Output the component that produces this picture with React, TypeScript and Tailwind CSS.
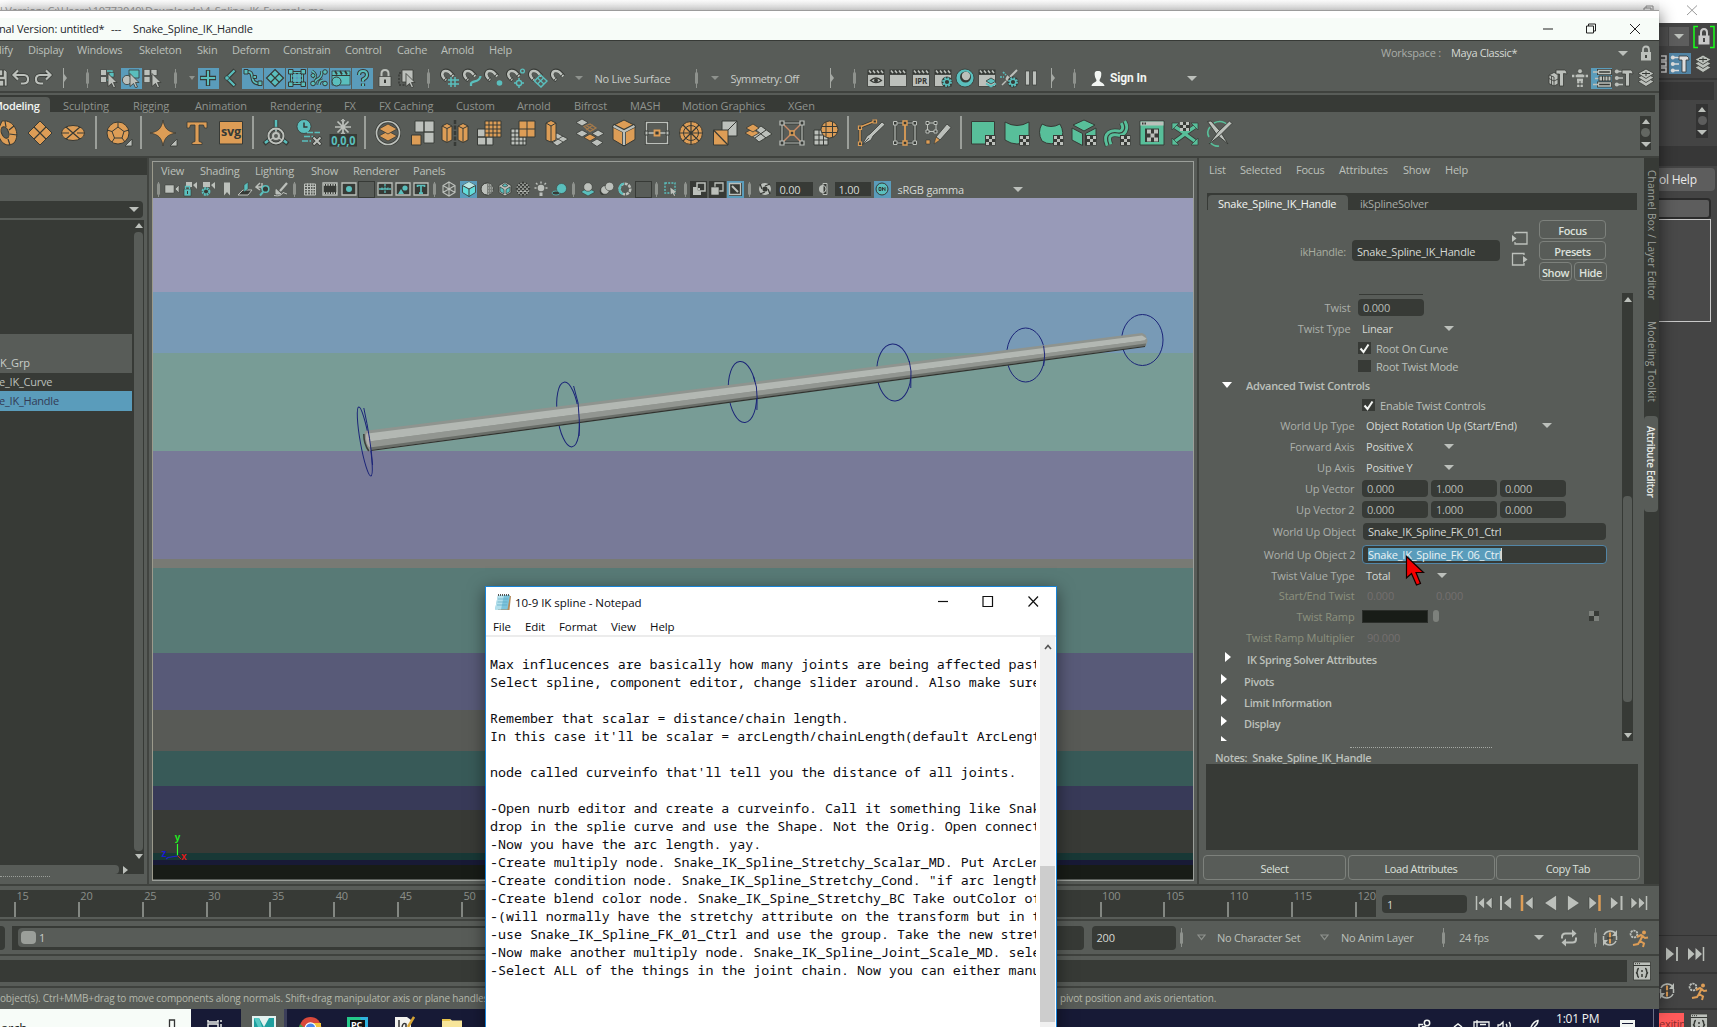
import React from 'react';

type Kids = { children?: React.ReactNode };

const L = '#bcc0bb';
const K = '#373a36';
const T = '#5abfbd';
const O = '#dd9d56';
const G = '#58bf9a';

/* ---------- icon frames ---------- */
const S20 = ({ children }: Kids) => (
  <svg className="h-5 w-5 shrink-0" viewBox="0 0 20 20" fill="none">{children}</svg>
);
const S26 = ({ children }: Kids) => (
  <svg className="h-[26px] w-[26px] shrink-0 overflow-visible" viewBox="0 0 26 26" fill="none">{children}</svg>
);
const S16 = ({ children }: Kids) => (
  <svg className="h-4 w-4 shrink-0" viewBox="0 0 16 16" fill="none">{children}</svg>
);

const Down = () => <span className="h-0 w-0 shrink-0 border-x-[5px] border-t-[5px] border-x-transparent border-t-[#bcc0bb]" />;
const Up = () => <span className="h-0 w-0 shrink-0 border-x-[4.5px] border-b-[5px] border-x-transparent border-b-[#bcc0bb]" />;
const SmallDown = () => <span className="h-0 w-0 shrink-0 border-x-[4px] border-t-[4px] border-x-transparent border-t-[#8e928d]" />;
const Pin = ({ w, h = 'h-[19px]' }: { w: string; h?: string }) => (
  <span className={`flex shrink-0 items-center justify-center ${w}`}>
    <span className={`flex w-[3px] items-center justify-center ${h}`}>
      <span className="absolute h-[12px] w-[3px] rounded-sm bg-[#8e928d]" />
      <span className="h-full w-px bg-[#8e928d]" />
    </span>
  </span>
);
const Fold = () => (
  <span className="flex w-[22px] shrink-0 items-center justify-center">
    <svg className="h-5 w-[6px]" viewBox="0 0 6 20"><path d="M1.5 0V20" stroke="#a5a9a4" /><path d="M2 6 5 10 2 14Z" fill="#a5a9a4" /></svg>
  </span>
);

const cursor = <path d="M9 5.500 18 14.500H14.500L16.500 19 14.500 19.800 12.500 15.500 9 18.500Z" fill={L} stroke={K} strokeWidth=".8" />;
const magnet = (
  <>
    <path d="M6.500 12.500C-1 7 2 1.500 7.500 2.800 10 3.500 11 5.500 13.500 8" stroke={K} strokeWidth="4" />
    <path d="M6.200 12C-.5 7 2.500 2 7.500 3.300 10 4 10.500 5.500 13.300 8.200" stroke={L} strokeWidth="2.600" />
    <path d="M4 12 6.800 9.500M10.500 8.500 13 5.800" stroke={K} strokeWidth=".9" />
  </>
);
const clap = (
  <>
    <path d="M1.500 1.500H18.500V6.500H1.500Z" fill={K} />
    <path d="M3 2.500 5 5M7 2.500 9 5M11 2.500 13 5M15 2.500 17 5" stroke={L} strokeWidth="1.700" />
    <path d="M1.500 6.500H18.500V18.500H1.500Z" fill={L} stroke={K} strokeWidth=".8" />
  </>
);
const gear = (
  <>
    <circle cx="14" cy="14" r="5.500" fill={K} />
    <circle cx="14" cy="14" r="3.800" stroke={T} strokeWidth="2.200" strokeDasharray="1.700 1.280" />
    <circle cx="14" cy="14" r="2.800" stroke={T} strokeWidth="1.400" />
  </>
);
const sheets = (
  <>
    <path d="M10 9 18 13.500 10 18.500 2 13.500Z" fill={L} stroke={K} strokeWidth=".8" />
    <path d="M10 5 18 9.500 10 14.500 2 9.500Z" fill={L} stroke={K} strokeWidth=".8" />
    <path d="M10 1 18 5.500 10 10.500 2 5.500Z" fill={L} stroke={K} strokeWidth=".8" />
    <path d="M6 5.500H14M10 3.500V8" stroke={K} />
  </>
);

/* ---------- status line ---------- */
const Cell = ({ on, children }: { on?: boolean } & Kids) => (
  <span className="flex w-[22.07px] shrink-0 items-center justify-center">
    <span className={`flex h-[21px] w-[21px] items-center justify-center ${on ? 'bg-[#5a9cbb]' : ''}`}>
      <S20>{children}</S20>
    </span>
  </span>
);

const StatusLine = () => (
  <div className="relative flex h-[26px] items-center">
    <div className="-ml-3 flex items-center">
      <Cell><path d="M3 2H16L18 4V18H3Z" fill={L} stroke={K} strokeWidth=".7" /><path d="M7 2V8H14V2M7 18V12H15V18" stroke={K} strokeWidth="1.500" /></Cell>
      <Cell><path d="M7 2.500 2.500 7 7 11.500M2.500 7H13C18.500 7 18.500 15.500 12.500 15.500H10" stroke={K} strokeWidth="3.600" /><path d="M7 2.500 2.500 7 7 11.500M2.500 7H13C18.500 7 18.500 15.500 12.500 15.500H10" stroke={L} strokeWidth="2.200" /></Cell>
      <Cell><path d="M13 2.500 17.500 7 13 11.500M17.500 7H7C1.500 7 1.500 15.500 7.500 15.500H10" stroke={K} strokeWidth="3.600" /><path d="M13 2.500 17.500 7 13 11.500M17.500 7H7C1.500 7 1.500 15.500 7.500 15.500H10" stroke={L} strokeWidth="2.200" /></Cell>
      <Fold />
      <Pin w="w-[22px]" />
      <Cell><path d="M1.500 1.500H7.500V7.500H1.500ZM1.500 8.500H7.500V14.500H1.500Z" fill={L} stroke={K} strokeWidth=".7" /><path d="M8 3H13V6M8 12H10" stroke={T} strokeWidth="1.400" /><path d="M10 4.500H15V9H10Z" fill={T} stroke={K} strokeWidth=".6" />{cursor}</Cell>
      <Cell on><path d="M8 2H18V10H8Z" fill={T} stroke={K} strokeWidth=".8" /><circle cx="6" cy="12" r="4.600" fill={L} stroke={K} strokeWidth=".8" />{cursor}</Cell>
      <Cell><path d="M1 1.500H7V7.500H1ZM8 1.500H14V7.500H8ZM1 8.500H7V14.500H1Z" fill={L} stroke={K} strokeWidth=".6" />{cursor}</Cell>
      <Pin w="w-[22px]" />
      <span className="flex w-[11px] justify-center"><span className="h-0 w-0 border-x-[3px] border-t-[4px] border-x-transparent border-t-[#8e928d]" /></span>
      <Cell on><path d="M10 2V18M2 10H18" stroke={K} strokeWidth="4.400" /><path d="M10 2.800V17.200M2.800 10H17.200" stroke={T} strokeWidth="2" /></Cell>
      <Cell><path d="M15 2 7 10 15 18" stroke={K} strokeWidth="4.400" /><path d="M14.500 2.500 7 10 14.500 17.500" stroke={T} strokeWidth="2.200" /><circle cx="7" cy="10" r="2.200" fill={T} stroke={K} strokeWidth=".7" /></Cell>
      <Cell on><path d="M3 4C14 2 4 16 17 15.500" stroke={K} strokeWidth="3.800" /><path d="M3 4C14 2 4 16 17 15.500" stroke={T} strokeWidth="1.700" /><path d="M1 1.500H5V6H1ZM15 13H19V17.500H15Z" fill={T} stroke={K} /><path d="M10 7.500H13.500V10.500H10Z" fill={T} stroke={K} /></Cell>
      <Cell on><path d="M10 1.500 18.500 10 10 18.500 1.500 10Z" fill={T} stroke={K} strokeWidth="1.200" /><path d="M5.500 5.500 14.500 14.500M14.500 5.500 5.500 14.500" stroke={K} strokeWidth="1.200" /></Cell>
      <Cell on><path d="M4.500 4.500H15.500V15.500H4.500Z" stroke={K} strokeWidth="3" /><path d="M4.500 4.500H15.500V15.500H4.500ZM8 4V16M12 4V16M4 8H16M4 12H16" stroke={T} strokeWidth="1.100" /><path d="M1.500 1.500H6V6H1.500ZM14 1.500H18.500V6H14ZM1.500 14H6V18.500H1.500ZM14 14H18.500V18.500H14Z" fill={T} stroke={K} /></Cell>
      <Cell on><path d="M3 3Q9 7 5 11M6 17Q5 13 9 11T13 3M10 17Q10 13 14 12" stroke={K} strokeWidth="3.200" /><path d="M3 3Q9 7 5 11M6 17Q5 13 9 11T13 3M10 17Q10 13 14 12" stroke={T} strokeWidth="1.600" /><circle cx="16" cy="4" r="2.300" fill={T} stroke={K} /><circle cx="4" cy="15.500" r="2.300" fill={T} stroke={K} /><circle cx="16" cy="15.500" r="2.300" fill={T} stroke={K} /><circle cx="4" cy="7.500" r="2" fill={T} stroke={K} /></Cell>
      <Cell on><path d="M1 3H19V17H1Z" fill={T} stroke={K} strokeWidth=".7" /><path d="M1 7.500H19" stroke={K} /><path d="M4 3 6 6.500M9 3 11 6.500M14 3 16 6.500" stroke={K} strokeWidth="1.800" /><circle cx="5.500" cy="13.500" r="4.500" fill={T} stroke={K} /></Cell>
      <Cell on><path d="M6 7Q6 3 10 3T14 7Q14 9.500 10 11.500V13.500M10 15.500V18" stroke={K} strokeWidth="4.200" /><path d="M6 7Q6 3 10 3T14 7Q14 9.500 10 11.500V13.500M10 15.500V18" stroke={T} strokeWidth="2" /></Cell>
      <Cell><path d="M6.500 9V5.500Q6.500 2 10 2T13.500 5.500V9" stroke={L} strokeWidth="2" /><path d="M4 8.500H16V18.500H4Z" fill={L} stroke={K} strokeWidth=".7" /><path d="M10 11.500V15" stroke={K} strokeWidth="2" /></Cell>
      <Cell><path d="M4 5H2V17H13" stroke={K} strokeWidth="1.500" strokeDasharray="2 1.500" /><path d="M5 2H16V14H5Z" fill={L} stroke={K} strokeWidth=".8" />{cursor}</Cell>
      <Pin w="w-[21px]" />
      <Cell>{magnet}<path d="M11 9V19M15 9V19M8 12H19M8 16H19" stroke={T} strokeWidth="1.500" /></Cell>
      <Cell>{magnet}<path d="M9 18V15.500C10 12 18 15 18.500 8" stroke={T} strokeWidth="2.200" /></Cell>
      <Cell>{magnet}<circle cx="15.500" cy="15" r="2.800" fill={T} /></Cell>
      <Cell>{magnet}<circle cx="13" cy="15" r="2.600" stroke={T} strokeWidth="1.500" /><path d="M13 10V12M13 18V20M8 15H10M16 15H18" stroke={T} strokeWidth="1.500" /><circle cx="16.500" cy="3" r="1.900" stroke={T} strokeWidth="1.300" /></Cell>
      <Cell>{magnet}<path d="M12.500 7 19 13 13 19 6.500 13Z" stroke={T} strokeWidth="1.500" /><path d="M9.500 10 16 16M15.500 10 9.500 16" stroke={T} strokeWidth="1.300" /></Cell>
      <Cell>{magnet}</Cell>
      <span className="flex w-4 justify-center"><SmallDown /></span>
      <span className="w-[98px] shrink-0 pl-[7px] text-[#c9cdc8]">No Live Surface</span>
      <Pin w="w-[22px]" />
      <span className="flex w-4 justify-center"><SmallDown /></span>
      <span className="w-[98px] shrink-0 pl-[7px] tracking-[-.4px] text-[#c9cdc8]">Symmetry: Off</span>
      <Fold />
      <Pin w="w-[22px]" />
      <Cell>{clap}<path d="M4.500 12.500Q10 7.500 15.500 12.500 10 17 4.500 12.500Z" fill={L} stroke={K} strokeWidth="1.200" /><circle cx="10" cy="12.500" r="2" fill={K} /></Cell>
      <Cell>{clap}</Cell>
      <Cell>{clap}<text x="10" y="15.800" textAnchor="middle" fontSize="8.500" fontWeight="700" fontFamily="Open Sans, sans-serif" fill={K} textLength="12" lengthAdjust="spacingAndGlyphs">IPR</text></Cell>
      <Cell>{clap}{gear}</Cell>
      <Cell><circle cx="10" cy="10" r="9" fill={T} stroke={K} strokeWidth=".8" /><circle cx="10.500" cy="9" r="5.500" fill={K} /><circle cx="11" cy="8" r="4.200" fill={L} /></Cell>
      <Cell>{clap}<path d="M14 10 19 13 14 16 9 13Z" fill={T} stroke={K} strokeWidth=".8" /><path d="M9 15.500 14 18.500 19 15.500" stroke={T} strokeWidth="1.800" /></Cell>
      <Cell><path d="M18 2 11 9" stroke={L} strokeWidth="2" /><path d="M8 6.500 13 11 8 14 6 11Z" fill={L} stroke={K} strokeWidth=".6" /><path d="M1 9H5M4 4 7 7" stroke={T} strokeWidth="1.600" strokeDasharray="2 1" />{gear}<path d="M3 17 7 13" stroke={L} strokeWidth="1.500" /></Cell>
      <Cell><path d="M4.500 3H8.500V17H4.500ZM11.500 3H15.500V17H11.500Z" fill={L} stroke={K} strokeWidth=".7" /></Cell>
      <Fold />
      <Pin w="w-[21px]" />
      <span className="flex w-[25px] shrink-0 justify-center pl-0.5">
        <svg className="h-[17px] w-4" viewBox="0 0 16 17"><path d="M8 1C4.500 1 4.500 3 4.800 5.500 5 8 6.500 9 6.500 10.500 6 12.500 2 12.500 1.500 16H14.500C14 12.500 10 12.500 9.500 10.500 9.500 9 11 8 11.200 5.500 11.500 3 11.500 1 8 1Z" fill="#f2f5f2" /></svg>
      </span>
      <span className="w-[77px] shrink-0 font-['Roboto',sans-serif] text-[12px] font-bold tracking-[-.1px] text-[#f2f5f2]">Sign In</span>
      <Down />
    </div>
    <div className="ml-auto mr-[2px] flex items-center">
      <Cell><path d="M1 7 6 4.500 10 6V16L6 18 1 15.500Z" fill={L} stroke={K} strokeWidth=".8" /><path d="M1 10.500 6 13 10 11M1 7 6 9 6 18M3.500 8V17" stroke={K} strokeWidth=".8" /><path d="M8 2H16.500Q19 2.500 19 6L15.500 5.500V18H11.500V6L8 6Z" fill={L} stroke={K} strokeWidth=".8" /></Cell>
      <Cell><circle cx="10" cy="3.200" r="2.400" fill={L} stroke={K} strokeWidth=".6" /><path d="M2 8H18" stroke={L} strokeWidth="2.500" /><path d="M7 6.500H13V13H7Z" fill={L} /><path d="M8.300 13V19M11.700 13V19" stroke={L} strokeWidth="2.300" /><path d="M5 6.500V9.500M15 6.500V9.500M7 10H13M7 16H13" stroke={K} /></Cell>
      <Cell on><path d="M6.500 2.500H18.500V5.500H6.500ZM6.500 15H18.500V18H6.500Z" fill={K} stroke={K} strokeWidth="3" /><path d="M6.500 2.500H18.500V5.500H6.500ZM6.500 15H18.500V18H6.500Z" stroke={L} strokeWidth="1.300" /><path d="M1 4H6M1 16.500H6M3 10.500H7" stroke={L} strokeWidth="1.500" /><path d="M7 8H19V13H7Z" fill={L} stroke={K} /><path d="M10.500 8V13M13 8V13M16 8V13" stroke={K} /></Cell>
      <Cell><path d="M3 3.500H9M3 10H9M3 16.500H9" stroke={L} strokeWidth="1.600" /><circle cx="2.800" cy="3.500" r="2" fill={L} /><circle cx="2.800" cy="10" r="2" fill={L} /><circle cx="2.800" cy="16.500" r="2" fill={L} /><path d="M8 2H16.500Q19 2.500 19 6L15.500 5.500V18H11.500V6L8 6Z" fill={L} stroke={K} strokeWidth=".8" /></Cell>
      <Cell>{sheets}</Cell>
    </div>
  </div>
);

/* ---------- shelf ---------- */
const SC = ({ children }: Kids) => (
  <span className="flex w-[33.7px] shrink-0 items-center justify-center"><S26>{children}</S26></span>
);
const SSep = () => <span className="flex w-[11.3px] shrink-0 justify-center"><span className="h-[33px] w-0.5 bg-[#9b9f9a]" /></span>;
const checker = (
  <>
    <path d="M15 15H25.500V25.500H15Z" fill={K} />
    <path d="M16 16H19V19H16ZM22 16H25V19H22ZM19 19H22V22H19ZM16 22H19V25H16ZM22 22H25V25H22Z" fill={L} />
  </>
);
const corner = <path d="M27 19V26H20Z" fill={L} stroke={K} strokeWidth=".8" />;

const Shelf = () => (
  <div className="flex h-11 items-center pb-[3px]">
    <div className="-ml-[11px] flex items-center">
      <SC><path d="M9 1C21-1 28 14 21 23 12 29 5 20 5 10Z" fill={O} stroke={K} /><ellipse cx="12" cy="12.500" rx="3.500" ry="6" transform="rotate(-22 12 12.500)" fill="#585c58" stroke={K} /><path d="M12 1 13 7M21 6 16 10M24 15 16.500 14M17 25 15 19" stroke={K} strokeWidth="1.200" /></SC>
      <SC><path d="M13 1 25 13 13 25 1 13Z" fill={O} stroke={K} /><path d="M7 7 19 19M19 7 7 19" stroke={K} strokeWidth="1.200" /></SC>
      <SC><ellipse cx="13" cy="13" rx="11.500" ry="7.500" fill={O} stroke={K} /><path d="M6 7 20 19M20 7 6 19M2 13H9M17 13H24" stroke={K} strokeWidth="1.200" /></SC>
      <SSep />
      <SC><circle cx="13" cy="13" r="11" fill={O} stroke={K} /><path d="M13 7 19 11.500 17 18H9.500L7 11.500ZM13 7V2M19 11.500 24 10M17 18 20 22M9.500 18 7 22M7 11.500 2 10" stroke={K} /><g>{corner}</g></SC>
      <SSep />
      <SC><path d="M13 0C14.500 8.500 17.500 11.500 26 13 17.500 14.500 14.500 17.500 13 26 11.500 17.500 8.500 14.500 0 13 8.500 11.500 11.500 8.500 13 0Z" fill={O} stroke={K} strokeWidth=".8" /><g>{corner}</g></SC>
      <SC><path d="M3 2H23V8H20.500L19.500 5H15V21.500L18 22.500V24.500H8V22.500L11 21.500V5H6.500L5.500 8H3Z" fill={O} stroke={K} strokeWidth=".8" /></SC>
      <SC><path d="M1.500 1.500H24.500V24H1.500Z" fill={O} stroke={K} /><text x="13" y="16" textAnchor="middle" fontSize="12" fontWeight="700" fontFamily="Open Sans, sans-serif" fill={K} textLength="20" lengthAdjust="spacingAndGlyphs">svg</text></SC>
      <SSep />
      <SC><path d="M13 11V0M7 19 1 24M19 19 25 24" stroke={K} strokeWidth="4.500" /><path d="M13 11V0M7 19 2 23M19 19 24 23" stroke={T} strokeWidth="2.600" /><circle cx="13" cy="16" r="7.500" stroke={K} strokeWidth="3.400" /><circle cx="13" cy="16" r="7.500" stroke={L} strokeWidth="2" /><circle cx="13" cy="16" r="3" stroke={L} strokeWidth="2" /><path d="M13 8V13M10 18 7 20M16 18 19 20" stroke={L} strokeWidth="1.400" /></SC>
      <SC><circle cx="8" cy="6.500" r="7" fill={T} stroke={K} strokeWidth=".8" /><path d="M8 2.500V7H11.500" stroke={K} strokeWidth="1.500" /><path d="M11 12.500H24M8 16.500H17M6 21H15" stroke={T} strokeWidth="1.600" strokeDasharray="6 1.500" /><path d="M17 17 25 25M25 17 17 25" stroke={K} strokeWidth="3.500" /><path d="M17.500 17.500 24.500 24.500M24.500 17.500 17.500 24.500" stroke={L} strokeWidth="2" /></SC>
      <SC><path d="M13-1V14M5 7H21M7.500 1.500 18.500 12.500M18.500 1.500 7.500 12.500" stroke={L} strokeWidth="1.700" /><path d="M11 0 13 2.500 15 0M11 14 13 11.500 15 14" stroke={L} /><path d="M-.5 14H27V26.500H-.5Z" fill={K} /><text x="13.300" y="24.800" textAnchor="middle" fontSize="12" fontWeight="700" fontFamily="Open Sans, sans-serif" fill={T} textLength="24" lengthAdjust="spacingAndGlyphs">0,0,0</text></SC>
      <SSep />
      <SC><circle cx="13" cy="13" r="11.500" stroke={K} strokeWidth="3" /><circle cx="13" cy="13" r="11.500" stroke={L} strokeWidth="1.700" /><path d="M13 11 22 16 13 21 4 16Z" fill={O} stroke={K} strokeWidth=".8" /><path d="M13 4 22 9 13 14 4 9Z" fill={O} stroke={K} strokeWidth=".8" /></SC>
      <SC><path d="M6 1H15V12H6ZM15 1H25V12H15ZM15 12H25V23H15Z" fill={L} stroke={K} strokeWidth=".9" /><path d="M2.500 15H12V25H2.500Z" fill={O} stroke={K} /></SC>
      <SC><path d="M13 0V26" stroke={K} strokeWidth="2.500" strokeDasharray="4 1.500" /><path d="M0 6 5 3.500 10 6V20L5 22.500 0 20ZM16 6 21 3.500 26 6V20L21 22.500 16 20Z" fill={O} stroke={K} /><path d="M0 6 5 8.500 10 6M5 8.500V22M16 6 21 8.500 26 6M21 8.500V22" stroke={K} /></SC>
      <SC><path d="M1.500 9H10V17H1.500ZM1.500 17H10V25H1.500ZM10 17H17V25H10Z" fill={L} stroke={K} /><path d="M9 1H25V17H9Z" fill={O} stroke={K} /><path d="M13 1V17M17 1V17M21 1V17M9 5H25M9 9H25M9 13H25" stroke={K} /></SC>
      <SC><path d="M1 9H16V25H1Z" fill={L} stroke={K} /><path d="M5 9V25M9 9V25M13 9V25M1 13H16M1 17H16M1 21H16" stroke={K} /><path d="M9 1H25V17H9Z" fill={O} stroke={K} /><path d="M17 1V17M9 9H25" stroke={K} /></SC>
      <SC><path d="M4 18 14 13 25 19 14 26Z" fill={L} stroke={K} strokeWidth=".8" /><path d="M9 23 20 16M9 15.500 20 22" stroke={K} strokeWidth=".8" /><path d="M3 3 8 .5 13 3V20L8 22 3 20Z" fill={O} stroke={K} /><path d="M3 3 8 6 13 3M8 6V22" stroke={K} /></SC>
      <SC><path d="M5-1 11 2.500 5 6-1 2.500ZM5 10 11 13.500 5 17-1 13.500ZM21 10 27 13.500 21 17 15 13.500ZM20 19 26 22.500 20 26.500 14 22.500Z" fill={L} stroke={K} strokeWidth=".8" /><path d="M13 14 19 17.500 13 21 7 17.500Z" fill={O} stroke={K} strokeWidth=".8" /><path d="M7 6.500 13 4 19 8 13 11.500ZM9 5.500 17 10M16 5 9 10" stroke="#a67a4a" strokeWidth="1.200" /></SC>
      <SC><path d="M13 0 24 5.500V19.500L13 26 2 19.500V5.500Z" fill={O} stroke={K} /><path d="M2 5.500 13 11 24 5.500M13 11V26" stroke={K} strokeWidth="4" /><path d="M2.500 6 13 11.500 23.500 6M13 11.500V25" stroke={L} strokeWidth="2.400" /></SC>
      <SC><path d="M2.500 2.500H23.500V23.500H2.500Z" stroke={K} strokeWidth="3.200" /><path d="M2.500 2.500H23.500V23.500H2.500ZM2 13H24" stroke={L} strokeWidth="1.500" /><path d="M1 11H4V15H1ZM22 11H25V15H22Z" fill={L} stroke={K} /><path d="M10.500 10.500H15.500V15.500H10.500Z" fill={K} stroke={O} strokeWidth="1.800" /></SC>
      <SC><circle cx="13" cy="13" r="11.500" fill={O} stroke={K} /><circle cx="13" cy="13" r="7.500" stroke={K} /><path d="M13 2V24M2 13H24M5 5 21 21M21 5 5 21" stroke={K} strokeWidth="1.200" /></SC>
      <SC><path d="M10 1H25V16H10Z" fill={L} stroke={K} /><path d="M10 16 25 1" stroke={K} /><path d="M1.500 10H16V25H1.500Z" fill={O} stroke={K} /><path d="M1.500 10 16 25" stroke={K} strokeWidth="1.200" /></SC>
      <SC><path d="M16 6 27 14 14 22 5 14Z" fill={L} stroke={K} strokeWidth=".9" /><path d="M10 18 21 10M11 10 21 18" stroke={K} /><path d="M7 9 14 13 7 17 0 13Z" fill={O} stroke={K} strokeWidth=".8" /><path d="M8 4 14 8 8 12 1 8Z" fill={O} stroke={K} strokeWidth=".8" /></SC>
      <SC><path d="M3 3H23V23H3Z" stroke={K} strokeWidth="3" /><path d="M3 3H23V23H3Z" stroke={L} strokeWidth="1.200" /><path d="M4 4 22 22M22 4 4 22" stroke="#c98a66" strokeWidth="1.400" /><path d="M1 1H5V5H1ZM21 1H25V5H21ZM1 21H5V25H1ZM21 21H25V25H21Z" fill={K} stroke={L} strokeWidth="1.200" /><path d="M11 11H15V15H11Z" fill={K} stroke={O} strokeWidth="1.500" /></SC>
      <SC><path d="M1 10H15V25H1Z" fill={L} stroke={K} /><path d="M6 10V25M10.500 10V25M1 15H15M1 20H15" stroke={K} /><circle cx="16.500" cy="9.500" r="8.500" fill={O} stroke={K} /><path d="M13 2V17M19.500 2V17M9 6.500H24M9 12.500H24" stroke={K} /></SC>
      <SSep />
      <SC><path d="M2 24V7L17 1" stroke={K} strokeWidth="3" /><path d="M2 24V7L17 1" stroke={O} strokeWidth="1.500" /><path d="M.5 22H3.500V25.500H.5ZM.5 6H3.500V9.500H.5ZM15 0H18.500V3H15Z" fill={K} stroke={O} strokeWidth="1.200" /><path d="M24 2 27 4.500 15 16 13 20 4 25 9 16 12 14Z" fill={L} stroke={K} strokeWidth=".8" /><path d="M5 24 11 18" stroke={K} strokeWidth=".8" /></SC>
      <SC><path d="M3 3H23V23H3Z" stroke={K} strokeWidth="3" /><path d="M3 3H23V23H3Z" stroke={L} strokeWidth="1.200" /><path d="M13 3V23" stroke={O} strokeWidth="1.800" /><path d="M1.500 1.500H5V5H1.500ZM21 1.500H24.500V5H21ZM1.500 21H5V24.500H1.500ZM21 21H24.500V24.500H21Z" fill={K} stroke={L} /><path d="M11 1H15V5H11ZM11 21H15V25H11Z" fill={K} stroke={O} strokeWidth="1.400" /></SC>
      <SC><path d="M2.500 3H11V11.500H2.500Z" stroke={L} /><path d="M1 1.500H4V4.500H1ZM9 1.500H12V4.500H9ZM1 10H4V13H1ZM9 10H12V13H9Z" fill={K} stroke={L} /><path d="M1 20H5V24H1Z" fill={O} stroke={K} strokeWidth=".6" /><path d="M22 4 26 7.500 15 20 11 17Z" fill={L} stroke={K} strokeWidth=".8" /><path d="M11 17 15 20 9 24Z" fill={O} stroke={K} strokeWidth=".6" /></SC>
      <SSep />
      <SC><path d="M1.500 1.500H24.500V24H1.500Z" fill={G} stroke={K} />{checker}</SC>
      <SC><path d="M1 2Q13 9 25 2V20Q13 28 1 20Z" fill={G} stroke={K} />{checker}</SC>
      <SC><path d="M4 4Q13 9 22 4 27 13 23 20 13 27 4 21-1 12 4 4Z" fill={G} stroke={K} />{checker}</SC>
      <SC><path d="M13 0 24 5 13 11 2 5ZM1 8 11.500 13.500V25.500L1 20ZM25 8 14.500 13.500V25.500L25 20Z" fill={G} stroke={K} />{checker}</SC>
      <SC><path d="M4 25C-1 13 8 12 13 13S22 9 18 2" stroke={K} strokeWidth="8.500" /><path d="M4 25C-1 13 8 12 13 13S22 9 18 2" stroke={G} strokeWidth="7" /><path d="M4 25C-1 13 8 12 13 13S22 9 18 2" stroke={K} strokeWidth="1.200" />{checker}</SC>
      <SC><path d="M1 1H25V25H1Z" fill={G} stroke={K} /><path d="M1.500 1.500H24.500V5.500H1.500Z" fill={L} /><path d="M3 3.500H8" stroke={K} strokeWidth="1.800" strokeDasharray="1.500 1" /><path d="M6 8.500H20V22H6Z" fill={K} /><path d="M8 9.500H12V13.500H8ZM15 9.500H19V13.500H15ZM11.500 13.500H15.500V17.500H11.500ZM8 17.500H12V21.500H8ZM15 17.500H19V21.500H15Z" fill={L} /></SC>
      <SC><path d="M2 6 13 13.500 24 6M2 22 13 14 24 22" stroke={K} strokeWidth="5" /><path d="M2 6 13 13.500 24 6M2 22 13 14 24 22" stroke={G} strokeWidth="3.400" /><path d="M0 3H7L0 10ZM26 3H19L26 10ZM0 25V18L7 25ZM26 25V18L19 25Z" fill={G} stroke={K} strokeWidth=".7" /><path d="M8 2H18V11H8Z" fill={K} /><path d="M8 2H11V5H8ZM14 2H17V5H14ZM11 5H14V8H11ZM8 8H11V11H8ZM14 8H17V11H14Z" fill={L} /></SC>
      <SC><path d="M8 3Q16-1 23 6M4 22Q8 27 13 26M3 17Q0 12 4 7" stroke={G} strokeWidth="1.600" /><path d="M1.500 1.500 5 1 14 11 22 24 11 15Z" fill={L} stroke={K} strokeWidth=".9" /><path d="M26 3.500 23.500 1 12 12 3 24 14.500 15Z" fill={L} stroke={K} strokeWidth=".9" /></SC>
    </div>
    <div className="ml-auto mr-[8px] flex h-[34px] w-[11px] flex-col items-center justify-between bg-[#373a36] py-[3px]">
      <Up /><span className="h-[9px] w-[9px] rounded-full bg-[#636762]" /><Down />
    </div>
  </div>
);

/* ---------- left outliner ---------- */
const Outliner = () => (
  <div className="flex h-full w-[149px] shrink-0 flex-col border-r-2 border-[#414440] bg-[#585c58]">
    <div className="h-[17px] w-full bg-[#373a36]" />
    <div className="mt-[26px] flex h-[17px] w-[143px] items-center justify-end rounded-r-sm bg-[#373a36] pr-1"><Down /></div>
    <div className="mt-0.5 flex h-[645px] w-[144px] bg-[#373a36]">
      <div className="flex w-[134px] flex-col overflow-hidden pr-0.5">
        <div className="mt-[114px] flex h-[38.5px] shrink-0 items-end bg-[#585c58] pb-[3px] text-[#c9cdc8]"><span>K_Grp</span></div>
        <div className="flex h-[18.5px] shrink-0 items-center"><span className="-ml-px">e_IK_Curve</span></div>
        <div className="flex h-[19.5px] shrink-0 items-center bg-[#5a9cbb] text-[#333b55]"><span className="-ml-px">e_IK_Handle</span></div>
      </div>
      <div className="flex w-[9px] flex-col items-center">
        <span className="mt-[3px]"><span className="block h-0 w-0 border-x-[4.5px] border-b-[5px] border-x-transparent border-b-[#bcc0bb]" /></span>
        <span className="mt-[4px] h-[619px] w-[9px] rounded bg-[#585c58]" />
        <span className="mt-[3px]"><span className="block h-0 w-0 border-x-[4.5px] border-t-[5px] border-x-transparent border-t-[#bcc0bb]" /></span>
      </div>
    </div>
    <div className="flex h-[9px] w-[144px] items-center bg-[#373a36]">
      <span className="h-[9px] w-[119px] rounded-r bg-[#585c58]" />
      <span className="ml-1 h-0 w-0 border-y-[4.5px] border-l-[5px] border-y-transparent border-l-[#bcc0bb]" />
    </div>
    <div className="mt-[2px] h-px w-[50px] border-t border-dotted border-[#9b9f9a]" />
  </div>
);

/* ---------- viewport ---------- */
const V = ({ children, box, w = 'w-[18.2px]' }: { box?: string; w?: string } & Kids) => (
  <span className={`flex shrink-0 items-center justify-center ${w}`}>
    <span className={`flex h-[17px] w-[17px] items-center justify-center ${box ?? ''}`}><S16>{children}</S16></span>
  </span>
);
const frame = <path d="M1 2H15V14H1Z" fill={K} stroke={L} strokeWidth="1.300" />;
const ball = (x: number, y: number) => <circle cx={x} cy={y} r="4.300" fill={L} stroke={K} strokeWidth=".6" />;

const BANDS = [
  'h-[94px] bg-[#989ab8]', 'h-[61px] bg-[#789ab6]', 'h-[98px] bg-[#789c96]', 'h-[108px] bg-[#787a98]',
  'h-[9px] bg-[#787a74]', 'h-[84.5px] bg-[#587a76]', 'h-[57px] bg-[#585a78]', 'h-[41.5px] bg-[#585a56]',
  'h-[35px] bg-[#385a58]', 'h-6 bg-[#383a58]', 'h-[43px] bg-[#383a36]', 'h-[7px] bg-[#183836]',
  'h-[5px] bg-[#181a36]', 'h-[14px] bg-[#181c17]',
];
const RINGS = [
  { cx: 365, cy: 441.5, rx: 4.5, ry: 35, a: -10 },
  { cx: 568.5, cy: 414.5, rx: 10.8, ry: 32.6, a: -7 },
  { cx: 743, cy: 392, rx: 14, ry: 30.6, a: -5 },
  { cx: 894.5, cy: 372.5, rx: 17, ry: 28.5, a: -3 },
  { cx: 1026.5, cy: 355, rx: 19, ry: 27, a: 0 },
  { cx: 1143.3, cy: 340, rx: 20.7, ry: 25.5, a: 0 },
];

const Scene = () => (
  <svg className="absolute inset-0 h-full w-full" viewBox="153 198 1041 682" preserveAspectRatio="none" fill="none">
    {RINGS.map((r) => (
      <ellipse key={r.cx} cx={r.cx} cy={r.cy} rx={r.rx} ry={r.ry} transform={`rotate(${r.a} ${r.cx} ${r.cy})`} stroke="#1b2478" strokeWidth="1" />
    ))}
    <path d="M365 431 368 430.500 1143 333 1146.500 335 1148.500 341 1146.500 346.500 372 451 367 450.500 364 442Z" fill="#8f948f" />
    <path d="M368 433.500 1143 335.500 1147.500 338.500 1145 340.500 369 441.500Z" fill="#b3b8b3" />
    <path d="M369 441.500 1145 340.500 1147 343 371 447.500Z" fill="#929691" />
    <path d="M370 447.500 1147 343.500 1146.500 346 371 450Z" fill="#6a6e69" />
    <path d="M371 450.500 1146 346.500" stroke="#30332f" strokeWidth="1.200" />
    <path d="M364 434Q364 444 369 451" stroke="#3c403c" strokeWidth="1.600" />
    <ellipse cx="368.500" cy="440" rx="2" ry="7" transform="rotate(-10 368.500 440)" fill="#b3b0ad" />
    <path d="M364 408Q371 440 372.800 465" stroke="#1b2478" />
    <path d="M574 386 578.500 403 579.700 420 579.500 436M754 376 757 387 757.700 398 757.500 410M910 361 911.700 371 911.500 388M1044.500 346 1045.500 355 1044.500 366" stroke="#1b2478" />
    <path d="M177.500 844V855.500" stroke="#2fff2f" strokeWidth="1.200" />
    <path d="M177.500 855.500 181 859" stroke="#d51f1f" />
    <path d="M177.500 856 168 857.500 166 859" stroke="#2020d0" strokeWidth="1.200" />
    <g fontFamily="Liberation Sans, sans-serif" fontSize="10" fontWeight="700">
      <text x="174.700" y="841" fill="#20f020">y</text>
      <text x="181" y="860" fill="#e01818">x</text>
      <text x="161.500" y="857.500" fill="#1818d8">z</text>
    </g>
  </svg>
);

const Viewport = () => (
  <div className="flex h-full w-[1048px] shrink-0 flex-col bg-[#585c58] pl-[3px] pt-[3px]">
    <div className="h-[720px] w-[1042px] border border-[#9b9f9a] border-l-[#9b9a8c]">
      <div className="flex h-[18px] items-center pb-[2px] pl-2">
        <span className="w-[39px]">View</span><span className="w-[55px]">Shading</span><span className="w-14">Lighting</span>
        <span className="w-[42px]">Show</span><span className="w-[60px]">Renderer</span><span>Panels</span>
      </div>
      <div className="flex h-[18px] items-center">
        <Pin w="w-[10px]" h="h-[15px]" />
        <V><path d="M1 4H10V12H1ZM11 8 15 4V12Z" fill={L} stroke={K} strokeWidth=".5" /></V>
        <V><path d="M4 1H10V6H4ZM11 4 15 1V8Z" fill={L} /><path d="M2 8H9V15H2Z" fill={T} stroke={K} strokeWidth=".6" /><path d="M3.500 8V5.500H7.500V8" stroke={T} strokeWidth="1.300" /><path d="M5.500 10V13" stroke={K} /></V>
        <V><path d="M3 1H10V6H3ZM11 4 15 1V8Z" fill={L} /><circle cx="6" cy="10.500" r="3.500" fill={K} stroke={T} strokeWidth="1.800" strokeDasharray="2 .8" /><circle cx="6" cy="10.500" r="2.500" stroke={T} /></V>
        <V><path d="M5 1.500H11V14.500L8 11 5 14.500Z" fill={L} /></V>
        <V><path d="M1 14 6 9H15L11 14Z" stroke={L} fill={K} /><path d="M7 11V4L11 1V8Z" fill={T} stroke={K} strokeWidth=".5" /></V>
        <V><path d="M1 6H8M5 2 1 6 5 9M7 2V8" stroke={L} strokeWidth="1.400" /><circle cx="10.500" cy="8" r="3.300" fill={K} stroke={T} strokeWidth="1.500" /><path d="M8 11 5 14.500" stroke={T} strokeWidth="2" /></V>
        <V><path d="M14 2 7 10" stroke={L} strokeWidth="2.200" /><path d="M3 8.500 8 13H3Z" fill={L} stroke={L} /><path d="M1 14.500Q8 16 10 11.500L14 13" stroke={L} /></V>
        <Pin w="w-[9px]" h="h-[15px]" />
        <V w="w-[22px]"><path d="M2.500 3H13.500V14H2.500Z" stroke={L} /><path d="M5.500 2.500V14M8.500 2.500V14M11 2.500V14M2 5.500H14M2 8.500H14M2 11H14" stroke={L} /></V>
        <V>{frame}<path d="M1.500 3.800H15M1.500 12.200H15" stroke={L} strokeWidth="1.800" strokeDasharray="1.500 1" /></V>
        <V>{frame}<circle cx="8" cy="8" r="3" fill={T} /></V>
        <V box="border border-[#373a36]" />
        <V>{frame}<path d="M8 3V13M2 8H14M5 6.500V9.500M11 6.500V9.500" stroke={T} strokeWidth="1.300" strokeDasharray="2.500 .8" /></V>
        <V>{frame}<path d="M3 13 6 8 9 13Z" fill={T} /><circle cx="10" cy="7" r="2.600" fill={T} /></V>
        <V>{frame}<path d="M4.500 6V4.500H11.500V6M8 4V12M6 12.200H10" stroke={T} strokeWidth="1.700" /></V>
        <Pin w="w-[9px]" h="h-[15px]" />
        <V w="w-[20px]"><path d="M8 1 14 4.500V11.500L8 15 2 11.500V4.500ZM2 4.500 8 8 14 4.500M8 8V15M8 1V8M2 11.500 8 8 14 11.500" stroke={L} strokeWidth="1.100" /></V>
        <V box="bg-[#5a9cbb]"><path d="M8 1 14.500 4.500V11.500L8 15.500 1.500 11.500V4.500Z" fill="#62dcda" stroke={K} strokeWidth=".8" /><path d="M8 1 14.500 4.500 8 8 1.500 4.500Z" fill="#b9e5e3" /><path d="M1.500 4.500 8 8 14.500 4.500M8 8V15.500" stroke={K} /></V>
        <V><circle cx="8" cy="8" r="6" fill={L} stroke={K} /><path d="M8 2A6 6 0 0 1 8 14Z" fill="#7b7f7a" /><path d="M9 4H13M9 7H14M9 10H14M9 13H11" stroke={L} strokeDasharray="1 1" /></V>
        <V><path d="M8 1 14 4.500V11.500L8 15 2 11.500V4.500Z" fill={L} stroke={K} strokeWidth=".8" /><path d="M3 6 7 8.500V13L3 10.500ZM13 6 9 8.500V13L13 10.500ZM8 2.500 11 4.500 8 6 5 4.500Z" fill={T} stroke={K} strokeWidth=".7" /></V>
        <V><circle cx="8" cy="8" r="6.500" fill={L} /><path d="M4 2 14 12M2 4 12 14M7 1 15 9M1 7 9 15M12 2 2 12M14 4 4 14M9 1 1 9M15 7 7 15" stroke={K} strokeWidth="1.100" /></V>
        <V><circle cx="8" cy="7" r="3.300" fill={L} /><path d="M6.500 11.500H9.500V15H6.500Z" fill={L} /><path d="M8 .5V2.500M1.500 7H3.500M12.500 7H14.500M3 2 4.500 3.500M13 2 11.500 3.500" stroke={L} strokeWidth="1.400" /></V>
        <V><ellipse cx="5" cy="12" rx="4" ry="2" fill={K} stroke={T} strokeWidth=".8" /><circle cx="10.500" cy="7.500" r="5" fill={T} stroke={K} strokeWidth=".5" /></V>
        <Pin w="w-[9px]" h="h-[15px]" />
        <V w="w-[20px]"><path d="M1 11 8 15 15 11 12 9H4Z" fill={T} stroke={K} strokeWidth=".6" />{ball(8, 6)}</V>
        <V><path d="M3 14A4.500 4.500 0 0 1 2 7L8 13Z" fill={K} />{ball(6, 9)}{ball(10.5, 5.5)}</V>
        <V><circle cx="8" cy="8" r="5.300" stroke={L} strokeWidth="2.500" strokeDasharray="3 1" /><path d="M7 2.500A5.500 5.500 0 0 0 6 13" stroke={T} strokeWidth="2.200" /></V>
        <V box="border border-[#373a36]" />
        <Pin w="w-[9px]" h="h-[15px]" />
        <V w="w-[20px]"><path d="M2 2H12V12H2Z" stroke={T} strokeWidth="1.400" strokeDasharray="2 1.200" /><path d="M7 6 14 11 11.500 12 12.500 15 11 15.500 9.500 12.500 7.500 14Z" fill={L} stroke={K} strokeWidth=".5" /></V>
        <Pin w="w-[8px]" h="h-[15px]" />
        <V w="w-[19px]" box="bg-[#373a36]"><path d="M2 6H10V14H2Z" fill={L} /><path d="M6 2H14V10H6Z" fill={K} stroke={L} strokeWidth="1.500" /><path d="M7 7H9V9H7Z" fill={L} /></V>
        <V box="bg-[#373a36]"><path d="M6 2H14V10H6Z" stroke={L} strokeWidth="1.300" /><path d="M2 6H10V14H2Z" fill={L} stroke={K} strokeWidth=".6" /></V>
        <V box="border-2 border-[#5a9cbb] bg-[#373a36]"><path d="M2.500 2.500H13.500V13.500H2.500Z" stroke={L} strokeWidth="1.300" /><path d="M5 5 11 11" stroke={L} strokeWidth="2" /></V>
        <Pin w="w-[9px]" h="h-[15px]" />
        <V w="w-[22px]"><circle cx="8" cy="8" r="6" fill={L} /><path d="M8 5 13 3M11 8 13 13M8 11 3 13M5 8 3 3" stroke={K} strokeWidth="1.300" /><circle cx="8" cy="8" r="2.600" fill={K} /></V>
        <span className="flex h-3.5 w-[37px] items-center bg-[#373a36] pl-1 text-[#d5d9d4]">0.00</span>
        <V w="w-[22px]"><path d="M7 2.500H11V13.500H7Z" stroke={L} fill={K} /><path d="M7 4A4 4 0 0 0 7 12Z" fill={L} /><path d="M7 4.500A3 3.500 0 0 1 7 11.500Z" fill={K} stroke={L} /></V>
        <span className="flex h-3.5 w-[36px] items-center bg-[#373a36] pl-1 text-[#d5d9d4]">1.00</span>
        <V w="w-[23px]" box="bg-[#5a9cbb]"><circle cx="8" cy="8" r="6" fill={T} stroke={K} /><path d="M5 6.500H7V9.500H5ZM8.500 9.800V6.300L11 9.600V6.200" stroke={K} /></V>
        <span className="ml-[4px] w-[115px] text-[#d5d9d4]">sRGB gamma</span>
        <Down />
      </div>
      <div className="relative h-[682px] overflow-hidden">
        {BANDS.map((b) => <div key={b} className={`w-full ${b}`} />)}
        <Scene />
      </div>
    </div>
  </div>
);

/* ---------- attribute editor ---------- */
const Row = ({ h, label, lw = 'w-[153.5px]', dim, children }: { h: string; label?: string; lw?: string; dim?: boolean } & Kids) => (
  <div className={`flex shrink-0 items-center ${h}`}>
    <span className={`mr-[7.5px] shrink-0 text-right tracking-[-.12px] ${lw} ${dim ? 'text-[#8d927f]' : 'text-[#acb0ab]'}`}>{label}</span>
    {children}
  </div>
);
const Num = ({ children }: Kids) => (
  <span className="mr-[3.5px] flex h-[17px] w-[65.5px] shrink-0 items-center rounded-sm bg-[#373a36] pl-[5px] text-[#b8bcb7]">{children}</span>
);
const Check = ({ on }: { on?: boolean }) => (
  <span className="flex h-3 w-[13px] shrink-0 items-center justify-center bg-[#373a36]">
    {on && <svg className="h-[11px] w-[11px]" viewBox="0 0 11 11" fill="none"><path d="M1.500 5.500 4.500 9 9.500 1.500" stroke="#f2f5f2" strokeWidth="2" /></svg>}
  </span>
);
const Section = ({ h, name, pad, gap }: { h: string; name: string; pad: string; gap: string }) => (
  <div className={`flex shrink-0 items-center ${h} ${pad}`}>
    <span className={`-mt-[5px] h-0 w-0 shrink-0 border-y-[5.5px] border-l-[6px] border-y-transparent border-l-white ${gap}`} />
    <b className="font-semibold tracking-[-.35px]">{name}</b>
  </div>
);
const Btn = ({ w, children }: { w: string } & Kids) => (
  <span className={`flex items-center justify-center rounded-sm border border-[#7d817c] pt-px tracking-[-.4px] text-[#dde1dc] ${w}`}>{children}</span>
);

const Attributes = () => (
  <div className="flex h-full w-[445px] shrink-0 flex-col bg-[#585c58] pl-[2px]">
    <div className="flex h-[23px] items-center pl-[8px]">
      <span className="w-[31px]">List</span><span className="w-14">Selected</span><span className="w-[43px]">Focus</span>
      <span className="w-16">Attributes</span><span className="w-[42px]">Show</span><span>Help</span>
    </div>
    <div className="ml-[6px] mt-3 flex h-[17px] w-[430px] items-end bg-[#373a36] pl-px">
      <span className="flex h-[15px] w-[140px] items-center rounded-t-sm bg-[#585c58] pl-[10px] pt-0.5 text-[#f2f5f2]">Snake_Spline_IK_Handle</span>
      <span className="flex h-[15px] items-center pl-3 pt-0.5 text-[#a9ada8]">ikSplineSolver</span>
    </div>
    <div className="flex h-[83px] pt-[9px]">
      <span className="mt-[25px] w-[145px] text-right text-[#a9aea0]">ikHandle:</span>
      <span className="ml-[6px] mt-[21px] flex h-[21px] w-[148px] items-center rounded-sm bg-[#373a36] pl-[5px] pt-px text-[#d5d9d4]">Snake_Spline_IK_Handle</span>
      <svg className="ml-[10px] mt-[12px] h-9 w-[19px]" viewBox="0 0 19 36" fill="none">
        <path d="M5 3V1.500H17V13H5V11" stroke={L} strokeWidth="1.300" /><path d="M2 4 6.500 7.500 2 11Z" fill={L} />
        <path d="M14 24V22.500H2.500V34H14V32" stroke={L} strokeWidth="1.300" /><path d="M13 25 17.500 28.500 13 32Z" fill={L} />
      </svg>
      <div className="ml-[10px] mt-px flex flex-col gap-[2px] font-semibold">
        <Btn w="h-[19px] w-[67px]">Focus</Btn>
        <Btn w="h-[19px] w-[67px]">Presets</Btn>
        <div className="flex gap-[2px]"><Btn w="h-[19px] w-[33px]">Show</Btn><Btn w="h-[19px] w-[33px]">Hide</Btn></div>
      </div>
    </div>
    <div className="flex h-[448px]">
      <div className="flex w-[421px] flex-col overflow-hidden">
        <div className="ml-[158px] mt-px h-px w-16 shrink-0 bg-[#373a36]" />
        <div className="h-[2px] shrink-0" />
        <Row h="h-5" lw="w-[149.5px]" label="Twist"><Num>0.000</Num></Row>
        <Row h="h-[22px]" lw="w-[149.5px]" label="Twist Type"><span className="w-[86px] pl-1 text-[#d5d9d4]">Linear</span><Down /></Row>
        <Row h="h-[18px]" lw="w-[149.5px]"><Check on /><span className="ml-[5px]">Root On Curve</span></Row>
        <Row h="h-[18px]" lw="w-[149.5px]"><Check /><span className="ml-[5px]">Root Twist Mode</span></Row>
        <div className="flex h-5 shrink-0 items-center pl-[21px]">
          <span className="h-0 w-0 border-x-[5.5px] border-t-[6px] border-x-transparent border-t-white" />
          <b className="ml-[14px] font-semibold tracking-[-.3px]">Advanced Twist Controls</b>
        </div>
        <Row h="h-5"><Check on /><span className="ml-[5px]">Enable Twist Controls</span></Row>
        <Row h="h-5" label="World Up Type"><span className="w-[180px] pl-1 tracking-[-.13px] text-[#d5d9d4]">Object Rotation Up (Start/End)</span><Down /></Row>
        <Row h="h-[22px]" label="Forward Axis"><span className="w-[82px] pl-1 text-[#d5d9d4]">Positive X</span><Down /></Row>
        <Row h="h-5" label="Up Axis"><span className="w-[82px] pl-1 text-[#d5d9d4]">Positive Y</span><Down /></Row>
        <Row h="h-[22px]" label="Up Vector"><Num>0.000</Num><Num>1.000</Num><Num>0.000</Num></Row>
        <Row h="h-[21px]" label="Up Vector 2"><Num>0.000</Num><Num>1.000</Num><Num>0.000</Num></Row>
        <Row h="h-[22px]" lw="w-[154.5px]" label="World Up Object"><span className="flex h-[17px] w-[243px] items-center rounded-sm bg-[#373a36] pl-[5px] text-[#d5d9d4]">Snake_IK_Spline_FK_01_Ctrl</span></Row>
        <Row h="h-6" lw="w-[154.5px]" label="World Up Object 2">
          <span className="-ml-px flex h-[19px] w-[245px] items-center rounded-sm border border-[#5285a6] bg-[#373a36] pl-[5px] text-[#e9f2f4]"><span className="flex h-[13px] items-center border-r border-[#d5d9d4] bg-[#5a9cbb]">Snake_IK_Spline_FK_06_Ctrl</span></span>
        </Row>
        <Row h="h-[19px]" label="Twist Value Type"><span className="w-[75px] pl-1 text-[#d5d9d4]">Total</span><Down /></Row>
        <Row dim h="h-[21px]" label="Start/End Twist"><span className="w-[69px] pl-[5px] text-[#746f6f]">0.000</span><span className="pl-[5px] text-[#746f6f]">0.000</span></Row>
        <Row dim h="h-5" label="Twist Ramp">
          <span className="h-[13px] w-[65.5px] border border-[#2b2e2a] bg-[#181c17]" /><span className="ml-[5px] h-3 w-[6.5px] rounded-sm bg-[#7d817c]" />
          <span className="ml-[150px] grid h-[10px] w-[10px] grid-cols-2 grid-rows-2"><i className="bg-[#7d817c]" /><i className="bg-[#373a36]" /><i className="bg-[#373a36]" /><i className="bg-[#7d817c]" /></span>
        </Row>
        <Row dim h="h-[22px]" label="Twist Ramp Multiplier"><span className="pl-[5px] text-[#746f6f]">90.000</span></Row>
        <Section h="h-[22px]" pad="pl-[24px]" gap="mr-[16px]" name="IK Spring Solver Attributes" />
        <Section h="h-[22px]" pad="pl-[20px]" gap="mr-[17px]" name="Pivots" />
        <Section h="h-5" pad="pl-[20px]" gap="mr-[17px]" name="Limit Information" />
        <Section h="h-[22px]" pad="pl-[20px]" gap="mr-[17px]" name="Display" />
        <div className="flex h-[22px] shrink-0 items-start pl-[20px] pt-[2px]"><span className="h-0 w-0 border-y-[5.5px] border-l-[6px] border-y-transparent border-l-white" /></div>
      </div>
      <div className="flex w-[11px] flex-col items-center bg-[#373a36] pt-1">
        <Up /><span className="mt-[194px] h-[206px] w-[9px] shrink-0 rounded bg-[#585c58]" /><span className="mt-[31px]"><span className="block h-0 w-0 border-x-[4.5px] border-t-[5px] border-x-transparent border-t-[#bcc0bb]" /></span>
      </div>
    </div>
    <div className="ml-[149px] mt-[6px] h-px w-[142px] border-t border-dotted border-[#a5a9a4]" />
    <div className="mt-[1px] flex h-[15px] items-center whitespace-pre pl-[14px] pt-px font-semibold tracking-[-.35px]">Notes:  Snake_Spline_IK_Handle</div>
    <div className="ml-[5px] h-[86px] w-[432px] bg-[#373a36]" />
    <div className="ml-0.5 mt-[5px] flex gap-[1.5px]">
      <Btn w="h-[25px] w-[143px]">Select</Btn><Btn w="h-[25px] w-[147px]">Load Attributes</Btn><Btn w="h-[25px] w-[144px]">Copy Tab</Btn>
    </div>
  </div>
);

const SideTabs = () => (
  <div className="flex h-full w-[15px] shrink-0 flex-col bg-[#373a36] text-[10px] leading-[15px] text-[#9da19c]">
    <span className="mt-[12px] h-[151px] tracking-[.25px] [writing-mode:vertical-rl]">Channel Box / Layer Editor</span>
    <span className="h-[95px] tracking-[.25px] [writing-mode:vertical-rl]">Modeling Toolkit</span>
    <span className="h-[96px] w-[14px] rounded-sm bg-[#585c58] pt-[10px] font-semibold leading-[14px] tracking-[-.25px] text-[#e9ece8] [writing-mode:vertical-rl]">Attribute Editor</span>
  </div>
);

/* ---------- bottom area ---------- */
const TICKS = Array.from({ length: 22 }, (_, i) => 15 + i * 5);

const P = ({ children, w = 'w-[22.3px]' }: { w?: string } & Kids) => (
  <span className={`flex shrink-0 items-center justify-center ${w}`}><S20>{children}</S20></span>
);
const anim = (
  <><path d="M4 7A7 7 0 0 1 16 6M16 13A7 7 0 0 1 4 14" stroke={L} strokeWidth="1.600" /><path d="M17 2V8H12ZM3 18V12H8Z" fill={L} /><path d="M3.500 8V12M16.500 8V12" stroke={L} strokeWidth="1.500" /><path d="M10 4.500V15.500" stroke={O} strokeWidth="2" /><path d="M7 10H13" stroke={K} strokeWidth="1.200" /></>
);
const runner = (
  <><circle cx="5" cy="6" r="3.400" stroke={L} strokeWidth="1.800" strokeDasharray="2.200 .8" /><circle cx="15" cy="4.500" r="2" fill={O} /><path d="M14 7 11 13 15 15.500 14 19M11 13 9 16 4 17M8 9 12 7 16 10 19 9.500" stroke={O} strokeWidth="2" /></>
);
const script = (
  <><path d="M1.500 1H18.500V19H1.500Z" fill={L} stroke={K} strokeWidth=".8" /><path d="M1.500 4.500H18.500" stroke={K} /><path d="M3 2.700H8" stroke={K} strokeDasharray="1 1" /><path d="M7 7.500Q5.500 7.500 5.500 9.500T4 12Q5.500 12 5.500 14T7 16.500M13 7.500Q14.500 7.500 14.500 9.500T16 12Q14.500 12 14.500 14T13 16.500M10 9V11M10 13V16" stroke={K} strokeWidth="1.500" /></>
);

const Timeline = () => (
  <div className="flex h-[33px] items-start pt-[4px]">
    <div className="flex h-[27px] w-[1376px] overflow-hidden bg-[#373a36] pl-[14px]">
      {TICKS.map((t) => (
        <div key={t} className="flex w-[63.87px] shrink-0 flex-col justify-between text-[#8b8f8a]">
          <span className="h-2.5 pl-[2.5px] leading-[11px]">{t}</span>
          <span className="h-[15px] w-[2px] bg-[#838782]" />
        </div>
      ))}
    </div>
    <span className="ml-1.5 mt-[5px] flex h-[18px] w-[85px] items-center rounded-sm bg-[#373a36] pl-[5px] text-[#d5d9d4]">1</span>
    <div className="ml-[5.5px] mt-[3px] flex items-center">
      <P><path d="M2.500 3V17" stroke={L} strokeWidth="1.500" /><path d="M10.500 4V16L4 10ZM18 4V16L11.500 10Z" fill={L} stroke={K} strokeWidth=".5" /></P>
      <P><path d="M5 3V17" stroke={L} strokeWidth="2" /><path d="M15.500 3.500V16.500L7.500 10Z" fill={L} stroke={K} strokeWidth=".5" /></P>
      <P><path d="M4 2V18" stroke={O} strokeWidth="2.500" /><path d="M15 3.500V16.500L7 10Z" fill={L} stroke={K} strokeWidth=".5" /></P>
      <P><path d="M15.500 2V18L3.500 10Z" fill={L} stroke={K} strokeWidth=".5" /></P>
      <P><path d="M4.500 2V18L16.500 10Z" fill={L} stroke={K} strokeWidth=".5" /></P>
      <P><path d="M4 3.500V16.500L12 10Z" fill={L} stroke={K} strokeWidth=".5" /><path d="M14.500 2V18" stroke={O} strokeWidth="2.500" /></P>
      <P><path d="M3.500 3.500V16.500L11.500 10Z" fill={L} stroke={K} strokeWidth=".5" /><path d="M14.500 3V17" stroke={L} strokeWidth="2" /></P>
      <P><path d="M1 4V16L7.500 10ZM8.500 4V16L15 10Z" fill={L} stroke={K} strokeWidth=".5" /><path d="M16.500 3V17" stroke={L} strokeWidth="1.500" /></P>
    </div>
  </div>
);

const RangeRow = () => (
  <div className="flex h-[33px] items-center">
    <span className="h-6 w-[4.5px] rounded-r-sm bg-[#373a36]" />
    <span className="ml-[7.5px] flex h-6 w-[1000px] items-center bg-[#373a36] pl-[6px]">
      <span className="flex h-[19px] w-full items-center rounded-l bg-[#585c58] pl-[3px]"><span className="h-[13px] w-[15px] rounded bg-[#9b9f9a]" /><span className="ml-[3px] text-[#c9cdc8]">1</span></span>
    </span>
    <span className="ml-[2px] h-6 w-[69.5px] rounded-sm bg-[#373a36]" />
    <span className="ml-[8px] flex h-6 w-[84.5px] items-center rounded-sm bg-[#373a36] pl-[5px] text-[#d5d9d4]">200</span>
    <Pin w="w-[10px]" />
    <span className="flex w-[31px] justify-center pl-1 pr-[5px]"><svg className="h-[7px] w-[9px]" viewBox="0 0 9 7" fill="none"><path d="M1 1H8L4.500 5.500Z" stroke="#8e928d" strokeWidth="1.200" /></svg></span>
    <span className="w-[98px]">No Character Set</span>
    <span className="flex w-[26px] pl-[5px]"><svg className="h-[7px] w-[9px]" viewBox="0 0 9 7" fill="none"><path d="M1 1H8L4.500 5.500Z" stroke="#8e928d" strokeWidth="1.200" /></svg></span>
    <span className="w-[97px]">No Anim Layer</span>
    <Pin w="w-[10px]" />
    <span className="w-[86px] pl-[11px]">24 fps</span>
    <Down />
    <P w="w-[50px]"><path d="M3 10.500V9Q3 5.500 6.500 5.500H14M17 9.500V11Q17 14.500 13.500 14.500H6" stroke={L} strokeWidth="2" /><path d="M13 1.500V9.500L17.500 5.500ZM7 10.500V18.500L2.500 14.500Z" fill={L} /></P>
    <P w="w-[1px]"><g /></P>
    <Pin w="w-[0px]" />
    <P w="w-[30px]">{anim}</P>
    <P w="w-[28px]">{runner}</P>
  </div>
);

/* ---------- main window ---------- */
const MENUS: [string, string][] = [
  ['Display', 'w-[49px]'], ['Windows', 'w-[62px]'], ['Skeleton', 'w-[58px]'], ['Skin', 'w-[35px]'], ['Deform', 'w-[51px]'],
  ['Constrain', 'w-[62px]'], ['Control', 'w-[52px]'], ['Cache', 'w-11'], ['Arnold', 'w-12'], ['Help', 'w-8'],
];
const TABS: [string, string][] = [
  ['Sculpting', 'w-[70px]'], ['Rigging', 'w-[62px]'], ['Animation', 'w-[75px]'], ['Rendering', 'w-[74px]'], ['FX', 'w-[35px]'],
  ['FX Caching', 'w-[77px]'], ['Custom', 'w-[61px]'], ['Arnold', 'w-[57px]'], ['Bifrost', 'w-14'], ['MASH', 'w-[52px]'],
  ['Motion Graphics', 'w-[106px]'], ['XGen', 'w-10'],
];

const MayaWindow = () => (
  <div className="absolute left-0 top-[10px] flex h-[999px] w-[1659px] flex-col overflow-hidden whitespace-nowrap border-t border-[#9c9c9c] bg-[#585c58] text-[#bcc0bb] shadow-[2px_2px_14px_rgba(0,0,0,0.45)]">
    <div className="h-[7px] shrink-0 bg-white" />
    <div className="flex h-[22px] shrink-0 items-center bg-[#f7fcf8] pb-px tracking-[-.15px] text-[#23262b]">
      <span className="-ml-px w-[112px]">nal Version: untitled*</span><span className="w-[22px]">---</span><span>Snake_Spline_IK_Handle</span>
      <svg className="ml-auto mr-[17px] h-4 w-[100px]" viewBox="0 0 100 16" fill="none" stroke="#222">
        <path d="M1 8H11" /><path d="M44.500 5H51.500V12H44.500ZM46.500 5V3H53.500V10H51.500" /><path d="M88 3 98 13M98 3 88 13" />
      </svg>
    </div>
    <div className="h-px shrink-0 bg-[#373a36]" />
    <div className="flex h-6 shrink-0 items-start">
      <div className="flex pt-px leading-4">
        <span className="-ml-[5px] w-[33px]">dify</span>
        {MENUS.map(([m, w]) => <span key={m} className={w}>{m}</span>)}
      </div>
      <div className="ml-auto mr-[7px] flex items-center pt-1 leading-4">
        <span className="w-[70px] text-[#a9ada8]">Workspace :</span><span className="w-[167px] tracking-[-.37px] text-[#d5d9d4]">Maya Classic*</span><Down />
        <span className="ml-[12px]"><svg className="h-4 w-3" viewBox="0 0 12 16" fill="none"><path d="M3 8V5Q3 1.500 6 1.500T9 5V8" stroke={L} strokeWidth="1.800" /><path d="M1 7H11V15.500H1Z" fill={L} /><path d="M6 10V13" stroke={K} strokeWidth="1.800" /></svg></span>
      </div>
    </div>
    <StatusLine />
    <div className="h-[2px] shrink-0 bg-[#3f423e]" />
    <div className="h-[2px] shrink-0" />
    <div className="mr-1 flex h-[17px] shrink-0 items-end bg-[#373a36] tracking-[-.12px] text-[#8f938e]">
      <span className="flex h-[15px] w-[50px] items-center justify-end rounded-tr-sm bg-[#585c58] pr-[10.5px] pt-0.5 font-semibold tracking-[-.3px] text-[#f2f5f2]">Modeling</span>
      <div className="ml-[13px] flex h-[15px] items-center pt-0.5">{TABS.map(([t, w]) => <span key={t + w} className={w}>{t}</span>)}</div>
    </div>
    <Shelf />
    <div className="h-[2px] shrink-0 bg-[#3f423e]" />
    <div className="flex h-[726px] shrink-0">
      <Outliner />
      <Viewport />
      <div className="h-full w-[2px] bg-[#3f423e]" />
      <Attributes />
      <SideTabs />
    </div>
    <div className="h-[2px] shrink-0 bg-[#3f423e]" />
    <Timeline />
    <div className="h-[2px] shrink-0 bg-[#3f423e]" />
    <RangeRow />
    <div className="h-[2px] shrink-0 bg-[#3f423e]" />
    <div className="flex h-[30px] shrink-0 items-center">
      <span className="h-[22px] w-[1627px] bg-[#373a36]" />
      <span className="ml-[5px] h-5 w-5"><S20>{script}</S20></span>
    </div>
    <div className="h-[2px] shrink-0 bg-[#3f423e]" />
    <div className="flex h-[21px] shrink-0 items-center text-[10px] tracking-[-.15px] text-[#b4b8ab]">
      <span className="w-[1060px] overflow-hidden">object(s). Ctrl+MMB+drag to move components along normals. Shift+drag manipulator axis or plane handles to extrude components or clone objects.</span>
      <span>pivot position and axis orientation.</span>
    </div>
  </div>
);

/* ---------- second application window behind ---------- */
const BackWindow = () => (
  <div className="absolute inset-0 flex flex-col whitespace-nowrap bg-[#444444]">
    <div className="flex h-[23px] shrink-0 items-start bg-gradient-to-b from-white to-[#dcdcdc] text-[#9a9a9a]">
      <span className="pt-[3px] leading-4">l Version: C:\Users\10773049\Downloads\4_Spline_IK_Example.ma</span>
      <svg className="ml-auto h-[23px] w-[140px]" viewBox="0 0 140 23" fill="none">
        <path d="M82.500 0H140V23H82.500Z" fill="#fff" />
        <path d="M20 10.500H30M67 8H74V15H67ZM69 8V6H76V12" stroke="#8a8a8a" /><path d="M110 5.500 120 15M120 5.500 110 15" stroke="#9a9a9a" />
      </svg>
    </div>
    <div className="ml-[1659px] flex flex-1 flex-col">
      <div className="flex h-[27px] items-center">
        <span className="h-[19px] w-[9px] bg-[#4f4f4f]" /><span className="ml-px flex h-[19px] w-5 items-center justify-center bg-[#5d5d5d]"><Down /></span>
        <svg className="ml-[3px] h-[24px] w-6" viewBox="0 0 24 24" fill="none"><path d="M6 1.500H2V22.500H6M18 1.500H22V22.500H18" stroke="#19ff19" strokeWidth="1.500" /><path d="M9 11V7.500Q9 4 12 4T15 7.500V11" stroke="#c8c8c8" strokeWidth="2" /><path d="M6.500 10.500H17.500V19.500H6.500Z" fill="#c8c8c8" /><path d="M12 13V17" stroke="#444" strokeWidth="2" /></svg>
      </div>
      <div className="flex h-[27px] items-center pl-[2px]">
        <svg className="h-5 w-[6px]" viewBox="0 0 6 20" fill="none"><path d="M0 2H5V6H0M0 14H5V18H0M0 8H5V12H0" stroke="#c8c8c8" strokeWidth="1.500" /></svg>
        <span className="ml-0.5 flex h-[21px] w-[22px] items-center justify-center bg-[#5285a6]"><S20><path d="M3 3.500H9M3 10H9M3 16.500H9" stroke="#ddd" strokeWidth="1.600" /><circle cx="2.800" cy="3.500" r="2" fill="#ddd" /><circle cx="2.800" cy="10" r="2" fill="#ddd" /><circle cx="2.800" cy="16.500" r="2" fill="#ddd" /><path d="M9 2H17Q19 3 19 6H16V18H12V6H9Z" fill="#ddd" stroke="#333" strokeWidth=".8" /></S20></span>
        <span className="ml-0.5"><S20>{sheets}</S20></span>
      </div>
      <div className="mt-[0.5px] h-[2px] bg-[#373737]" />
      <div className="mr-[3px] mt-[2px] h-[18px] bg-[#373737]" />
      <div className="ml-[37px] mt-1 flex h-[34px] w-3 flex-col items-center justify-between bg-[#333] py-[3px]"><Up /><span className="h-[9px] w-[9px] rounded-full bg-[#5d5d5d]" /><Down /></div>
      <div className="mt-[8px] h-[20px] bg-[#373737]" />
      <div className="mt-[2px] flex h-[23px] w-[56px] items-center rounded-r-sm bg-[#5d5d5d] text-[12px] text-[#e9e9e9]">ol Help</div>
      <div className="mt-[7px] h-[21px] w-[52px] rounded-r-sm border-2 border-l-0 border-[#2b2b2b] bg-[#5d5d5d]" />
      <div className="h-[103px] w-[52px] border border-l-0 border-[#c9c9c9] bg-[#494949]" />
      <div className="mt-auto flex h-[92px] flex-col">
        <div className="h-px bg-[#333]" />
        <div className="flex h-[36px] items-center pl-[3px]">
          <P w="w-[20px]"><path d="M4 3.500V16.500L12 10Z" fill={L} /><path d="M15 3V17" stroke={L} strokeWidth="1.800" /></P>
          <P w="w-[28px]"><path d="M2 4V16L8.500 10ZM9.500 4V16L16 10Z" fill={L} /><path d="M17.500 3V17" stroke={L} strokeWidth="1.500" /></P>
        </div>
        <div className="h-[2px] bg-[#363636]" />
        <div className="flex h-[34px] items-center"><P w="w-[16px]">{anim}</P><P w="w-[45px]">{runner}</P></div>
        <div className="h-[2px] bg-[#363636]" />
        <div className="flex h-[17px] items-start pt-[3px]">
          <span className="h-4 w-[25px] overflow-hidden bg-[#ff5a5a] pt-[5px] leading-3 text-[#8a2b2b]">exitin</span>
          <span className="ml-[5px] h-4 overflow-hidden"><S20>{script}</S20></span>
        </div>
      </div>
    </div>
  </div>
);

/* ---------- taskbar ---------- */
const Taskbar = () => (
  <div className="absolute left-0 top-[1009px] flex h-[18px] w-[1659px] items-start overflow-hidden bg-[#171a36]">
    <div className="flex h-full w-[191px] justify-between bg-[#f7fcf8] pr-[15px] text-[13px] text-[#222]">
      <span className="-ml-[6px] pt-[9px] leading-[20px]">earch</span>
      <svg className="h-[18px] w-2" viewBox="0 0 8 18" fill="none"><path d="M1.500 18V11H6.500V18" stroke="#333" strokeWidth="1.300" /></svg>
    </div>
    <div className="flex w-[50px] justify-center pr-[3px]"><svg className="h-[18px] w-4" viewBox="0 0 16 18" fill="none"><path d="M1 18V15H11V18M1 11V13H11V11M14 11V13M14 15V18" stroke="#e9ece8" strokeWidth="1.500" /></svg></div>
    <div className="flex h-full w-[43px] justify-center bg-[#585c58] pl-[2px]"><svg className="h-[18px] w-[24px]" viewBox="0 0 24 18"><path d="M0 7H24V18H0Z" fill="#e3f1ef" /><path d="M2 9H7L12 18H2ZM22 9H17L12 18H22Z" fill="#1f9f9f" /><path d="M2 9H7L10 18H6Z" fill="#56c9c4" /></svg></div>
    <div className="h-full w-[3px] bg-[#3b3e5a]" />
    <div className="flex w-[47px] justify-center"><svg className="h-[18px] w-[23px]" viewBox="0 0 23 18"><circle cx="11.500" cy="19" r="11" fill="#d9493b" /><path d="M1 15 8 21V18H0Z" fill="#3f9f4f" /><path d="M11 14H22V18H11Z" fill="#f3c33a" /><circle cx="11.500" cy="19" r="5.800" fill="#fff" /><circle cx="11.500" cy="19" r="4.600" fill="#4a87e8" /></svg></div>
    <div className="flex w-[47px] justify-center"><svg className="h-[18px] w-[21px]" viewBox="0 0 21 18"><path d="M0 8H21V18H0Z" fill="#25c98a" /><path d="M13 8H21V18H16Z" fill="#2fb3e0" /><path d="M3 11H18V18H3Z" fill="#111" /><text x="4" y="19" fontSize="9" fontWeight="700" fontFamily="Open Sans, sans-serif" fill="#fff">PC</text></svg></div>
    <div className="flex w-[47px] justify-center"><svg className="h-[18px] w-[21px]" viewBox="0 0 21 18" fill="none"><path d="M1 8H13L17 11V18H1Z" fill="#f2f2ee" /><path d="M5 11V18M8 18Q9 13 12 15V18" stroke="#333" strokeWidth="1.500" /><path d="M20 8 14 18" stroke="#d7a534" strokeWidth="2.500" /></svg></div>
    <div className="flex w-[47px] justify-center"><svg className="h-[18px] w-[22px]" viewBox="0 0 22 18"><path d="M1 10H9L11 11.500H21V18H1Z" fill="#f7e59a" /><path d="M1 10H9V12H1Z" fill="#e8c44a" /></svg></div>
    <div className="ml-auto flex">
      <svg className="h-[18px] w-[140px]" viewBox="0 0 140 18" fill="none" stroke="#f2f5f2" strokeWidth="1.500">
        <circle cx="20" cy="14" r="2.700" /><path d="M12 18V15.500H16M15 18Q16 17 19 18" /><path d="M47 18 51 15 55 18" /><path d="M67 18V13H82V18M70 11V18M73 15.500H79" strokeWidth="1.300" /><path d="M91 18V16H93L96 13V18M99 15Q100.500 17 99.500 18M102 13Q104 15.500 103 18" strokeWidth="1.300" /><path d="M124 18Q127 12 131 11.500 131 15 127 18" />
      </svg>
      <span className="w-[72px] pl-[9px] pt-[2px] text-[12px] leading-4 text-[#f2f5f2]">1:01 PM</span>
      <svg className="h-[18px] w-[40px]" viewBox="0 0 40 18"><path d="M1 11H16V18H1Z" fill="#f2f5f2" /><path d="M3 14.500H14" stroke="#171a36" /><path d="M34.500 0V18" stroke="#6b6e85" /></svg>
    </div>
  </div>
);

/* ---------- notepad ---------- */
const NOTE = `
Max influcences are basically how many joints are being affected past
Select spline, component editor, change slider around. Also make sure

Remember that scalar = distance/chain length.
In this case it'll be scalar = arcLength/chainLength(default ArcLength

node called curveinfo that'll tell you the distance of all joints.

-Open nurb editor and create a curveinfo. Call it something like Snake
drop in the splie curve and use the Shape. Not the Orig. Open connect
-Now you have the arc length. yay.
-Create multiply node. Snake_IK_Spline_Stretchy_Scalar_MD. Put ArcLen
-Create condition node. Snake_IK_Spline_Stretchy_Cond. "if arc length
-Create blend color node. Snake_IK_Spine_Stretchy_BC Take outColor of
-(will normally have the stretchy attribute on the transform but in t
-use Snake_IK_Spline_FK_01_Ctrl and use the group. Take the new stret
-Now make another multiply node. Snake_IK_Spline_Joint_Scale_MD. sele
-Select ALL of the things in the joint chain. Now you can either manu`;

const Notepad = () => (
  <div className="absolute left-[485px] top-[586px] flex h-[450px] w-[572px] flex-col border border-[#1883d7] bg-white text-[#0b0b10] shadow-[0_4px_16px_rgba(0,0,0,0.5)]">
    <div className="flex h-[30px] items-center pl-2">
      <svg className="h-[18px] w-[18px]" viewBox="0 0 18 18" fill="none"><path d="M5 3H17L15.500 17H4Z" fill="#b58b5b" /><path d="M4 2H16L13.500 16.500H1Z" fill="#7cc4dc" /><path d="M4 2H10L7 16.500H1Z" fill="#b4e0ec" /><path d="M4 2H16" stroke="#555" strokeWidth="2" strokeDasharray="1 1" /><path d="M4 6H14M3.500 9H13.500M3 12H13" stroke="#5ba7c2" strokeWidth=".7" /></svg>
      <span className="ml-[3px] text-[11.5px] tracking-[-.05px]">10-9 IK spline - Notepad</span>
      <svg className="ml-auto mr-[17.5px] h-4 w-[102px]" viewBox="0 0 102 16" fill="none" stroke="#111" strokeWidth="1.200"><path d="M1 7.500H11" /><path d="M46 2.500H55.500V12.500H46Z" /><path d="M91.500 2.500 101 12.500M101 2.500 91.500 12.500" /></svg>
    </div>
    <div className="flex h-[18px] items-center pl-[7px] text-[11.5px] tracking-[-.1px]">
      <span className="w-8">File</span><span className="w-[34px]">Edit</span><span className="w-[52px]">Format</span><span className="w-[39px]">View</span><span>Help</span>
    </div>
    <div className="h-[2px] bg-[#ececec]" />
    <div className="flex flex-1">
      <pre className="w-[550px] overflow-hidden pl-1 font-['Noto_Sans_Mono','DejaVu_Sans_Mono','Liberation_Mono',monospace] text-[13.3px] leading-[18px] tracking-normal">{NOTE}</pre>
      <div className="ml-[4px] flex w-[15px] flex-col items-center bg-[#f0f0f0]">
        <svg className="mt-[6px] h-2 w-2" viewBox="0 0 8 8" fill="none"><path d="M1 6 4 2.500 7 6" stroke="#555" strokeWidth="1.600" /></svg>
        <span className="mt-[215px] h-[156px] w-[15px] bg-[#cdcdcd]" />
      </div>
    </div>
  </div>
);

const Pointer = () => (
  <svg className="absolute left-[1405px] top-[555px] h-8 w-5" viewBox="0 0 20 32"><path d="M1.500 1.500V23L6.500 18.500 11.500 30 15.500 28.500 11 17.500H18.500Z" fill="#f50000" stroke="#140000" strokeWidth="1.200" /></svg>
);

export default function App() {
  return (
    <div className="relative h-[1027px] w-[1717px] overflow-hidden font-['Open_Sans','Noto_Sans',sans-serif] text-[11px] leading-[15px] tracking-[-.22px]">
      <BackWindow />
      <MayaWindow />
      <Taskbar />
      <Notepad />
      <Pointer />
    </div>
  );
}
